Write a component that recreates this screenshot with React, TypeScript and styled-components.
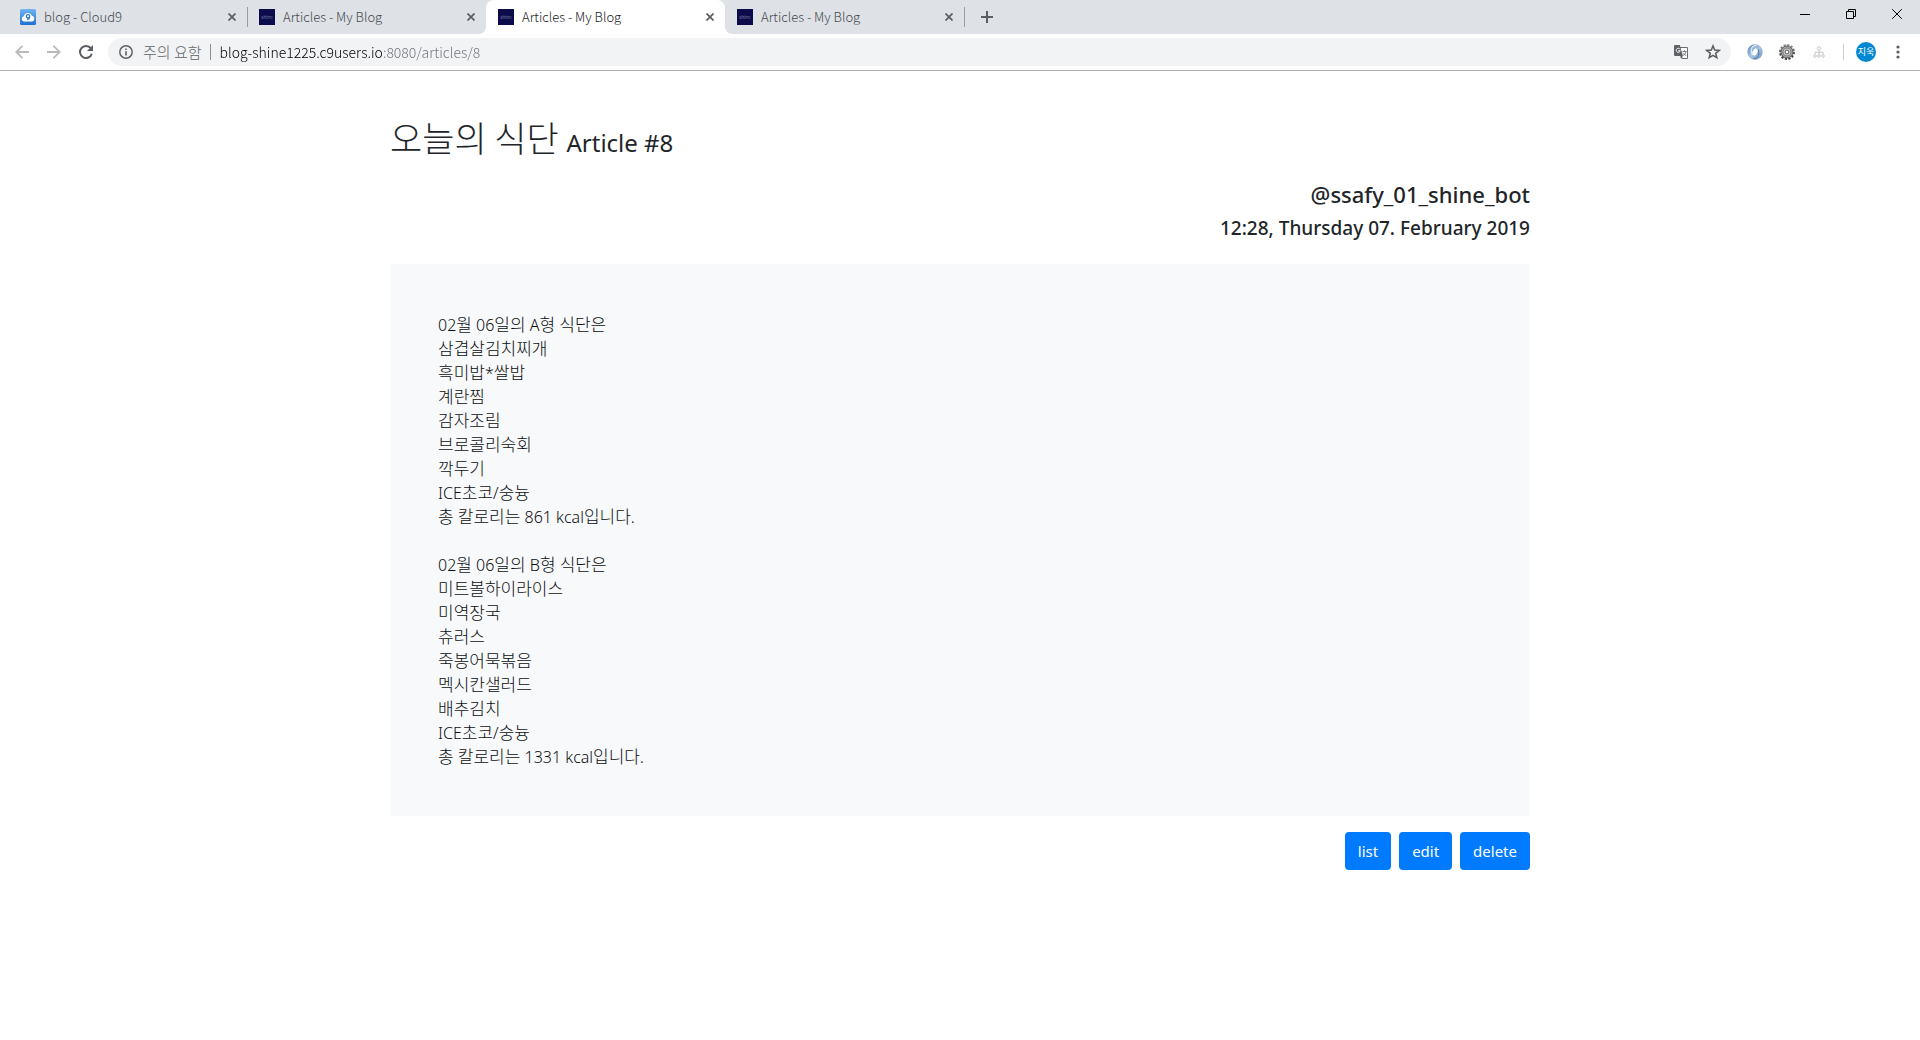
import React from "react";
import styled, { createGlobalStyle } from "styled-components";

const korean = '"Noto Sans CJK KR", sans-serif';
const latin = '"Noto Sans", "Noto Sans CJK KR", sans-serif';

const GlobalStyle = createGlobalStyle`
  *, *::before, *::after { box-sizing: border-box; }
  body { margin: 0; background: #fff; color: #212529; font-family: ${latin}; }
  h1, h2, h3, ul { margin: 0; padding: 0; }
  button { border: 0; padding: 0; background: none; font: inherit; color: inherit; cursor: pointer; }
  svg { display: block; }
`;

/* ---------- browser window ---------- */

const TabStrip = styled.div`
  display: flex;
  height: 34px;
  padding-left: 8px;
  background: #dee1e6;
`;

const Tabs = styled.div`
  display: flex;
  flex: 1;
  min-width: 0;
`;

const Tab = styled.div<{ $active?: boolean; $divider?: boolean }>`
  position: relative;
  display: flex;
  align-items: center;
  width: 239px;
  padding: 0 10px 0 12px;
  color: ${(p) => (p.$active ? "#202124" : "#45494d")};
  background: ${(p) => (p.$active ? "#fff" : "transparent")};
  border-radius: 8px 8px 0 0;

  &::before,
  &::after {
    content: "";
    display: ${(p) => (p.$active ? "block" : "none")};
    position: absolute;
    bottom: 0;
    width: 8px;
    height: 8px;
  }
  &::before {
    left: -8px;
    background: radial-gradient(circle at 0 0, transparent 8px, #fff 8px);
  }
  &::after {
    display: ${(p) => (p.$active || p.$divider ? "block" : "none")};
    right: ${(p) => (p.$divider ? "-1px" : "-8px")};
    bottom: ${(p) => (p.$divider ? "7px" : "0")};
    width: ${(p) => (p.$divider ? "1px" : "8px")};
    height: ${(p) => (p.$divider ? "20px" : "8px")};
    background: ${(p) =>
      p.$divider ? "#9a9da2" : "radial-gradient(circle at 100% 0, transparent 8px, #fff 8px)"};
  }
`;

const TabButton = styled.button`
  display: flex;
  flex: 1;
  align-items: center;
  gap: 8px;
  min-width: 0;
  font: 300 13px/20px ${korean};
  text-align: left;
  white-space: nowrap;
`;

const CloseButton = styled.button`
  display: grid;
  place-items: center;
  width: 10px;
  height: 16px;
`;

const NewTabButton = styled.button`
  display: grid;
  place-items: center;
  width: 46px;
  height: 34px;
`;

const WindowControls = styled.div`
  display: flex;
`;

const WindowButton = styled.button`
  display: grid;
  place-items: center;
  width: 46px;
  height: 28px;
  color: #000;
`;

const Toolbar = styled.div`
  display: flex;
  align-items: center;
  height: 37px;
  padding: 0 6px 0 6px;
  border-bottom: 1px solid #b1b1b1;
`;

const ToolButton = styled.button<{ $muted?: boolean }>`
  display: grid;
  flex: none;
  place-items: center;
  width: 32px;
  height: 28px;
  color: ${(p) => (p.$muted ? "#bababa" : "#5a5d61")};
`;

const AddressBar = styled.form`
  display: flex;
  flex: 1;
  align-items: center;
  height: 28px;
  margin: 0 8px 0 6px;
  padding: 0 2px 0 11px;
  border-radius: 14px;
  background: #f1f3f4;
`;

const SecurityButton = styled.button`
  display: flex;
  flex: none;
  align-items: center;
  gap: 10px;
  color: #5f6368;
  font: 300 15px/20px ${korean};
`;

const Divider = styled.span<{ $light?: boolean }>`
  flex: none;
  width: 1px;
  height: 16px;
  margin: 0 ${(p) => (p.$light ? "12px" : "9px")} 0 8px;
  background: ${(p) => (p.$light ? "#ccc" : "#8b8e92")};
`;

const AddressInput = styled.input`
  flex: 1;
  min-width: 0;
  height: 24px;
  padding: 0;
  border: 0;
  outline: 0;
  font: 300 14px/24px ${korean};
  color: transparent;
  background: linear-gradient(90deg, #000 164px, #6b7076 164px);
  -webkit-background-clip: text;
  background-clip: text;
  caret-color: #202124;
`;

const Avatar = styled.button`
  flex: none;
  width: 20px;
  height: 20px;
  margin-right: 6px;
  border-radius: 50%;
  background: #0288d1;
  color: #fff;
  font: 400 9px/20px ${korean};
`;

/* ---------- article page ---------- */

const Page = styled.main`
  max-width: 1140px;
  margin: 0 auto;
  padding: 48px 0;
`;

const Title = styled.h1`
  height: 40px;
  font: 300 35px/36px ${korean};

  small {
    font: 400 24px/24px ${latin};
  }
`;

const Meta = styled.div`
  display: flex;
  flex-direction: column;
  gap: 8px;
  margin: 21px 0 24px;
  text-align: right;
`;

const Author = styled.h2`
  font: 500 22px/28px ${latin};
`;

const Published = styled.h3`
  font: 500 19px/24px ${latin};
`;

const Card = styled.section`
  display: flex;
  flex-direction: column;
  gap: 24px;
  padding: 48px;
  background: #f8f9fa;
`;

const MenuList = styled.ul`
  list-style: none;
  color: #0d0f12;
  font: 300 17px/24px ${korean};
`;

const MenuLine = styled.li`
  height: 24px;
`;

const LatinRun = styled.span`
  font: 350 16px/16px ${latin};
`;

const Actions = styled.div`
  display: flex;
  justify-content: flex-end;
  gap: 8px;
  margin-top: 16px;
`;

const ActionLink = styled.a`
  padding: 7px 13px;
  border-radius: 4px;
  background: #007bff;
  color: #fff;
  font: 400 15px/24px ${latin};
  text-decoration: none;
`;

/* ---------- icons ---------- */

const CloudFavicon = () => (
  <svg width="16" height="16" viewBox="0 0 16 16" aria-hidden="true">
    <defs>
      <linearGradient id="c9" x1="0" y1="0" x2="0" y2="1">
        <stop offset="0" stopColor="#6fb4f3" />
        <stop offset="1" stopColor="#1f6fd0" />
      </linearGradient>
    </defs>
    <rect width="16" height="16" rx="1.5" fill="url(#c9)" />
    <path d="M4 12.500a2.700 2.700 0 0 1-.3-5.300A4.400 4.400 0 0 1 12 6.800a2.900 2.900 0 0 1 0 5.700z" fill="#fff" />
    <path d="M9.700 7.300a1.700 1.700 0 1 1-3.400 0 1.700 1.700 0 0 1 3.400 0c0 1.800-.8 3-2.600 3.200" fill="none" stroke="#2f7fd8" strokeWidth="1.300" />
  </svg>
);

const ShineFavicon = () => (
  <svg width="16" height="16" viewBox="0 0 16 16" aria-hidden="true">
    <rect width="16" height="16" fill="#0c0c4c" />
    <text x="8" y="10" fontSize="5" textAnchor="middle" fill="#b9b9d4" fontFamily="Lato, sans-serif">
      shine
    </text>
  </svg>
);

const Cross = () => (
  <svg width="8" height="8" viewBox="0 0 8 8" aria-hidden="true">
    <path d="M.5.5l7 7M7.500.5l-7 7" stroke="#5a5d61" strokeWidth="1.700" />
  </svg>
);

const Arrow = ({ flip }: { flip?: boolean }) => (
  <svg width="14" height="14" viewBox="0 0 14 14" aria-hidden="true">
    <path
      d={flip ? "M0 7h12.500M6.500.8L12.700 7l-6.200 6.200" : "M14 7H1.500M7.500.8L1.300 7l6.200 6.200"}
      fill="none"
      stroke="currentColor"
      strokeWidth="1.800"
    />
  </svg>
);

const Reload = () => (
  <svg width="14" height="14" viewBox="0 0 14 14" aria-hidden="true">
    <path d="M11.700 3.200A6 6 0 1 0 12.800 8.700" fill="none" stroke="currentColor" strokeWidth="2" />
    <path d="M14 0v6H8z" fill="currentColor" />
  </svg>
);

const Info = () => (
  <svg width="14" height="14" viewBox="0 0 14 14" aria-hidden="true">
    <circle cx="7" cy="7" r="6.200" fill="none" stroke="#5f6368" strokeWidth="1.500" />
    <path d="M7 6.200v4.300M7 3.500v1.500" stroke="#5f6368" strokeWidth="1.600" />
  </svg>
);

const Translate = () => (
  <svg width="14" height="15" viewBox="0 0 14 15" aria-hidden="true">
    <path d="M6 2.500h7.500v11H8.200L7 10.500" fill="#fff" stroke="#6a6e73" />
    <path d="M8.500 6.500h4M10.500 5.300v1.200M12 6.500c-.4 2-1.600 3.300-2.800 4M9.300 7.800l2.700 3" fill="none" stroke="#6a6e73" strokeWidth=".9" />
    <path d="M1 0h4.800l3.200 11H1a1 1 0 0 1-1-1V1a1 1 0 0 1 1-1z" fill="#5f6368" />
    <path d="M6 4.300a2 2 0 1 0 .2 1.500H4.300" fill="none" stroke="#fff" />
    <path d="M6 11.200h3l-1.800 2.500z" fill="#5f6368" />
  </svg>
);

const Star = () => (
  <svg width="16" height="16" viewBox="0 0 16 16" aria-hidden="true">
    <path d="M8 1.900l1.700 4.200 4.500.3-3.500 2.900 1.100 4.400L8 11.300l-3.800 2.400 1.100-4.400L1.800 6.400l4.500-.3z" fill="none" stroke="#5a5d61" strokeWidth="1.500" />
  </svg>
);

const Swirl = () => (
  <svg width="16" height="16" viewBox="0 0 16 16" aria-hidden="true">
    <defs>
      <linearGradient id="swirl" x1="0" y1="0" x2="1" y2="1">
        <stop offset="0" stopColor="#5e86b8" />
        <stop offset=".5" stopColor="#a9c4e2" />
        <stop offset="1" stopColor="#6d94c4" />
      </linearGradient>
    </defs>
    <circle cx="8" cy="8" r="7.700" fill="url(#swirl)" />
    <path d="M9.500 1.300C4.500 1.500 3 6 5.200 11" fill="none" stroke="#dce8f5" strokeWidth="1.300" />
    <path d="M6.500 14.700c5-.2 6.500-4.700 4.300-9.700" fill="none" stroke="#47719f" strokeWidth="1" />
    <ellipse cx="8" cy="8" rx="2.400" ry="3.600" fill="#fff" transform="rotate(20 8 8)" />
  </svg>
);

const Gear = () => (
  <svg width="16" height="16" viewBox="0 0 16 16" aria-hidden="true">
    <defs>
      <linearGradient id="gear" x1="0" y1="0" x2="0" y2="1">
        <stop offset="0" stopColor="#8c8c8c" />
        <stop offset="1" stopColor="#2f2f2f" />
      </linearGradient>
    </defs>
    <circle cx="8" cy="8" r="7" fill="none" stroke="url(#gear)" strokeWidth="2" strokeDasharray="2.200 1.460" />
    <circle cx="8" cy="8" r="6" fill="#a2a2a2" stroke="#5a5a5a" strokeWidth="1" />
    <circle cx="8" cy="8" r="4" fill="#cfcfcf" stroke="#777" strokeWidth=".8" />
    <circle cx="8" cy="8" r="1.900" fill="#fff" stroke="#555" strokeWidth="1" />
  </svg>
);

const Sitemap = () => (
  <svg width="12" height="12" viewBox="0 0 12 12" aria-hidden="true">
    <g fill="none" stroke="#c9c9c9">
      <circle cx="6" cy="2.300" r="1.700" />
      <path d="M6 4v5M2 8.500V6.200h8v2.300" />
      <circle cx="2" cy="10" r="1.300" />
      <circle cx="6" cy="10" r="1.300" />
      <circle cx="10" cy="10" r="1.300" />
    </g>
  </svg>
);

const Dots = () => (
  <svg width="4" height="14" viewBox="0 0 4 14" aria-hidden="true">
    <g fill="#5a5d61">
      <circle cx="2" cy="2" r="1.600" />
      <circle cx="2" cy="7" r="1.600" />
      <circle cx="2" cy="12" r="1.600" />
    </g>
  </svg>
);

const WindowIcon = ({ d }: { d: string }) => (
  <svg width="10" height="10" viewBox="0 0 10 10" aria-hidden="true">
    <path d={d} fill="none" stroke="currentColor" />
  </svg>
);

/* ---------- content ---------- */

const tabs = [
  { title: "blog - Cloud9", icon: <CloudFavicon />, divider: true },
  { title: "Articles - My Blog", icon: <ShineFavicon /> },
  { title: "Articles - My Blog", icon: <ShineFavicon />, active: true },
  { title: "Articles - My Blog", icon: <ShineFavicon />, divider: true },
];

const menus = [
  [
    "02월 06일의 A형 식단은",
    "삼겹살김치찌개",
    "흑미밥*쌀밥",
    "계란찜",
    "감자조림",
    "브로콜리숙회",
    "깍두기",
    "ICE초코/숭늉",
    "총 칼로리는 861 kcal입니다.",
  ],
  [
    "02월 06일의 B형 식단은",
    "미트볼하이라이스",
    "미역장국",
    "츄러스",
    "죽봉어묵볶음",
    "멕시칸샐러드",
    "배추김치",
    "ICE초코/숭늉",
    "총 칼로리는 1331 kcal입니다.",
  ],
];

/* Latin letters and digits are set smaller than the Hangul around them. */
const MixedText = ({ text }: { text: string }) => (
  <>
    {text
      .split(/([\x20-\x7e]+)/)
      .filter(Boolean)
      .map((run, i) => (/^[\x20-\x7e]/.test(run) ? <LatinRun key={i}>{run}</LatinRun> : run))}
  </>
);

export default function App() {
  return (
    <>
      <GlobalStyle />
      <header>
        <TabStrip>
          <Tabs>
            {tabs.map((tab, i) => (
              <Tab key={i} $active={tab.active} $divider={tab.divider}>
                <TabButton>
                  {tab.icon}
                  {tab.title}
                </TabButton>
                <CloseButton aria-label="Close tab">
                  <Cross />
                </CloseButton>
              </Tab>
            ))}
            <NewTabButton aria-label="New tab">
              <svg width="12" height="12" viewBox="0 0 12 12" aria-hidden="true">
                <path d="M6 0v12M0 6h12" stroke="#5a5d61" strokeWidth="2" />
              </svg>
            </NewTabButton>
          </Tabs>
          <WindowControls>
            <WindowButton aria-label="Minimize">
              <WindowIcon d="M0 5.500h10" />
            </WindowButton>
            <WindowButton aria-label="Restore">
              <WindowIcon d="M.5 2.500h7v7h-7zM2.500 2.500v-2h7v7h-2" />
            </WindowButton>
            <WindowButton aria-label="Close">
              <WindowIcon d="M.2.2l9.600 9.600M9.800.2L.2 9.800" />
            </WindowButton>
          </WindowControls>
        </TabStrip>
        <Toolbar>
          <ToolButton $muted aria-label="Back">
            <Arrow />
          </ToolButton>
          <ToolButton $muted aria-label="Forward">
            <Arrow flip />
          </ToolButton>
          <ToolButton aria-label="Reload">
            <Reload />
          </ToolButton>
          <AddressBar onSubmit={(e) => e.preventDefault()}>
            <SecurityButton type="button">
              <Info />
              주의 요함
            </SecurityButton>
            <Divider />
            <AddressInput aria-label="Address" defaultValue="blog-shine1225.c9users.io:8080/articles/8" />
            <ToolButton type="button" aria-label="Translate">
              <Translate />
            </ToolButton>
            <ToolButton type="button" aria-label="Bookmark">
              <Star />
            </ToolButton>
          </AddressBar>
          <ToolButton aria-label="Swirl extension">
            <Swirl />
          </ToolButton>
          <ToolButton aria-label="Gear extension">
            <Gear />
          </ToolButton>
          <ToolButton aria-label="Sitemap extension">
            <Sitemap />
          </ToolButton>
          <Divider $light />
          <Avatar>지욱</Avatar>
          <ToolButton aria-label="Menu">
            <Dots />
          </ToolButton>
        </Toolbar>
      </header>
      <Page>
        <Title>
          오늘의 식단 <small>Article #8</small>
        </Title>
        <Meta>
          <Author>@ssafy_01_shine_bot</Author>
          <Published>12:28, Thursday 07. February 2019</Published>
        </Meta>
        <Card>
          {menus.map((lines, i) => (
            <MenuList key={i}>
              {lines.map((line) => (
                <MenuLine key={line}>
                  <MixedText text={line} />
                </MenuLine>
              ))}
            </MenuList>
          ))}
        </Card>
        <Actions>
          <ActionLink href="#list">list</ActionLink>
          <ActionLink href="#edit">edit</ActionLink>
          <ActionLink href="#delete">delete</ActionLink>
        </Actions>
      </Page>
    </>
  );
}
